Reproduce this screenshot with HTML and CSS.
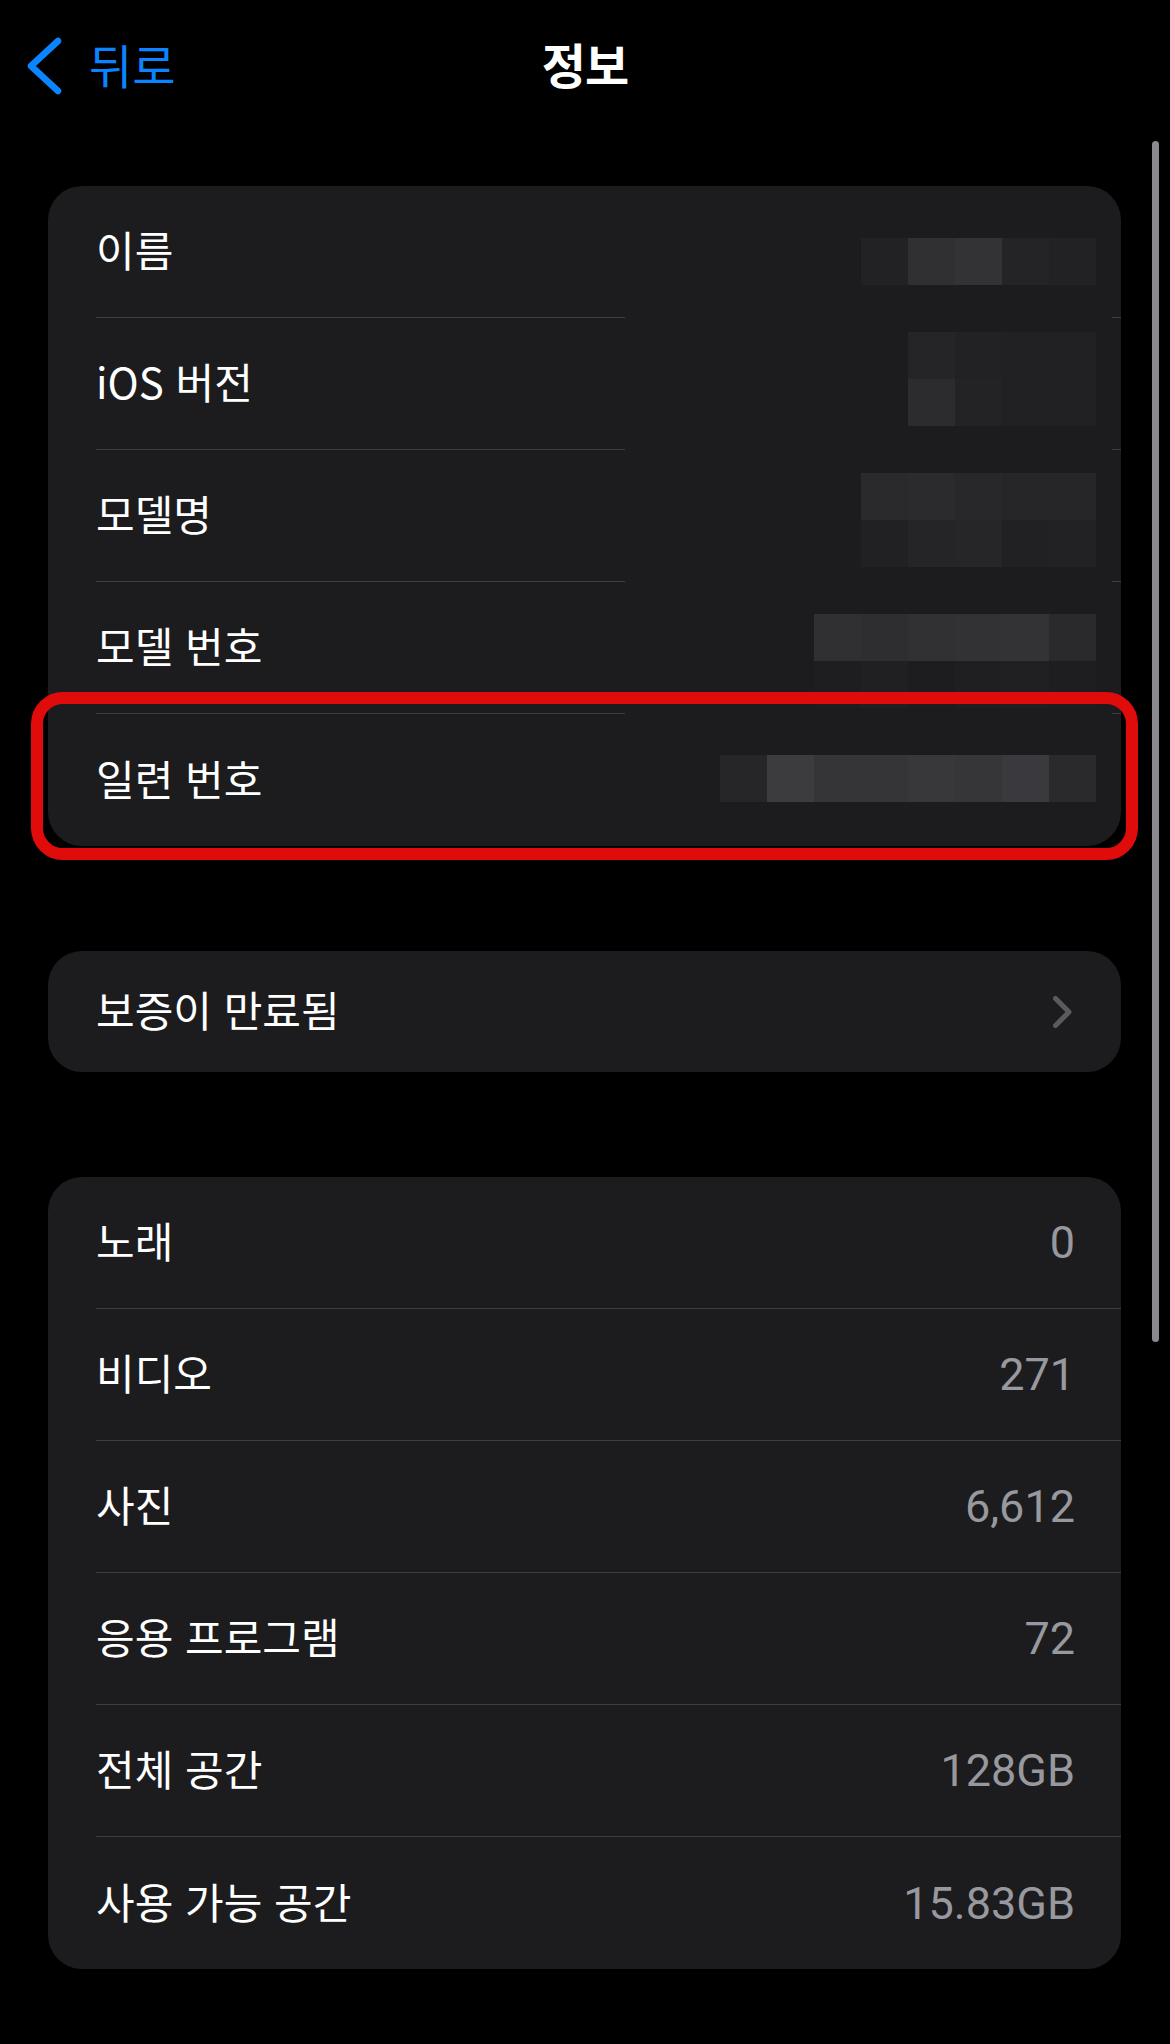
FILE: index.html
```html
<!DOCTYPE html>
<html lang="ko">
<head>
<meta charset="utf-8">
<title>정보</title>
<link rel="stylesheet" href="styles.css">
</head>
<body>
<header class="nav">
  <div class="nav-left">
    <svg class="back-icon" width="40" height="64" viewBox="0 0 40 64"><path d="M34 7 L7 32 L34 57" fill="none" stroke="#0a84ff" stroke-width="6.5" stroke-linecap="round" stroke-linejoin="round"/></svg>
    <span class="back-text">뒤로</span>
  </div>
  <h1 class="title">정보</h1>
  <div class="nav-right"></div>
</header>

<main class="content">
  <section class="card card-info">
    <div class="row">
      <span class="label">이름</span>
      <div class="mosaic mz-1">
        <i class="g22"></i><i class="g30"></i><i class="g33"></i><i class="g24"></i><i class="g22"></i>
      </div>
    </div>
    <div class="sep sep-cut"></div>
    <div class="row">
      <span class="label">iOS 버전</span>
      <div class="mosaic mz-2">
        <i class="g25"></i><i class="g22"></i><i class="g21"></i><i class="g21"></i>
        <i class="g2c"></i><i class="g23"></i><i class="g21"></i><i class="g21"></i>
      </div>
    </div>
    <div class="sep sep-cut"></div>
    <div class="row">
      <span class="label">모델명</span>
      <div class="mosaic mz-3">
        <i class="g2a"></i><i class="g2b"></i><i class="g28"></i><i class="g26"></i><i class="g26"></i>
        <i class="g21"></i><i class="g25"></i><i class="g26"></i><i class="g21"></i><i class="g22"></i>
      </div>
    </div>
    <div class="sep sep-cut"></div>
    <div class="row">
      <span class="label">모델 번호</span>
      <div class="mosaic mz-4">
        <i class="g30"></i><i class="g2e"></i><i class="g31"></i><i class="g32"></i><i class="g33"></i><i class="g2a"></i>
        <i class="g1e"></i><i class="g20"></i><i class="g1d"></i><i class="g1f"></i><i class="g20"></i><i class="g1e"></i>
      </div>
    </div>
    <div class="sep sep-cut"></div>
    <div class="row row-last">
      <span class="label">일련 번호</span>
      <div class="mosaic mz-5">
        <i class="g26"></i><i class="g3c"></i><i class="g35"></i><i class="g35"></i><i class="g38"></i><i class="g36"></i><i class="g3a"></i><i class="g2a"></i>
      </div>
    </div>
    <div class="highlight"></div>
  </section>

  <section class="card card-warranty">
    <div class="row row-link">
      <span class="label">보증이 만료됨</span>
      <svg class="chevron" width="26" height="36" viewBox="0 0 26 36"><path d="M7.5 4.5 L21 18 L7.5 31.5" fill="none" stroke="#5b5b5f" stroke-width="5" stroke-linecap="round" stroke-linejoin="round"/></svg>
    </div>
  </section>

  <section class="card card-stats">
    <div class="row row-value"><span class="label">노래</span><span class="value">0</span></div>
    <div class="sep"></div>
    <div class="row row-value"><span class="label">비디오</span><span class="value">271</span></div>
    <div class="sep"></div>
    <div class="row row-value"><span class="label">사진</span><span class="value">6,612</span></div>
    <div class="sep"></div>
    <div class="row row-value"><span class="label">응용 프로그램</span><span class="value">72</span></div>
    <div class="sep"></div>
    <div class="row row-value"><span class="label">전체 공간</span><span class="value">128GB</span></div>
    <div class="sep"></div>
    <div class="row row-value row-last"><span class="label">사용 가능 공간</span><span class="value">15.83GB</span></div>
  </section>
</main>

<div class="scrollbar"></div>
</body>
</html>
```

FILE: styles.css
```css
html, body {
  margin: 0;
  padding: 0;
  background: #000;
}

body {
  position: relative;
  width: 1170px;
  min-height: 2044px;
  overflow: hidden;
  font-family: "Noto Sans CJK KR", "Noto Sans", sans-serif;
  color: #fff;
}

/* Navigation bar */
.nav {
  display: grid;
  grid-template-columns: 1fr auto 1fr;
  align-items: center;
  height: 126px;
  padding-bottom: 8px;
}

.nav-left {
  display: flex;
  align-items: center;
  padding-left: 24px;
}

.back-icon {
  display: block;
  margin-top: 6px;
}

.back-text {
  margin-left: 25px;
  font-size: 47px;
  letter-spacing: 0;
  color: #0a84ff;
  line-height: 1;
}

.title {
  margin: 0;
  font-size: 48px;
  font-weight: 700;
  letter-spacing: -1px;
  line-height: 1;
  color: #fff;
}

/* Content */
.content {
  padding-top: 52px;
  padding-left: 48px;
  width: 1073px;
  display: flex;
  flex-direction: column;
  gap: 105px;
}

.card {
  position: relative;
  background: #1c1c1e;
  border-radius: 34px;
}

.row {
  position: relative;
  height: 131px;
  display: flex;
  align-items: center;
  justify-content: space-between;
  padding: 0 46px 0 48px;
}

.row-last {
  height: 132px;
}

.row-link {
  height: 121px;
  padding-right: 47px;
}

.label {
  font-size: 42px;
  letter-spacing: 0;
  line-height: 1;
  color: #fff;
  white-space: nowrap;
  margin-bottom: 5px;
}

.value {
  font-family: Roboto, "Liberation Sans", sans-serif;
  font-size: 45px;
  line-height: 1;
  color: #98989f;
}

.chevron {
  display: block;
}

.sep {
  height: 1px;
  margin-left: 48px;
  background: #3d3d41;
}

.sep-cut {
  background: linear-gradient(to right, #3d3d41 0, #3d3d41 529px, transparent 529px, transparent 1016px, #3d3d41 1016px);
}

/* Redaction mosaic overlay */
.mosaic {
  position: absolute;
  right: 25px;
  display: grid;
  grid-auto-rows: 47px;
}

.mosaic i {
  display: block;
}

.mz-1 { top: 52px; grid-template-columns: repeat(5, 47px); }
.mz-2 { top: 14px; grid-template-columns: repeat(4, 47px); }
.mz-3 { top: 23px; grid-template-columns: repeat(5, 47px); }
.mz-4 { top: 32px; grid-template-columns: repeat(6, 47px); }
.mz-5 { top: 41px; grid-template-columns: repeat(8, 47px); }

.g1d { background: #1d1d1f; }
.g1e { background: #1e1e20; }
.g1f { background: #1f1f21; }
.g20 { background: #202022; }
.g21 { background: #212123; }
.g22 { background: #222224; }
.g23 { background: #232325; }
.g24 { background: #242426; }
.g25 { background: #252527; }
.g26 { background: #262628; }
.g28 { background: #28282a; }
.g2a { background: #2a2a2c; }
.g2b { background: #2b2b2d; }
.g2c { background: #2c2c2e; }
.g2e { background: #2e2e30; }
.g30 { background: #303032; }
.g31 { background: #313133; }
.g32 { background: #323234; }
.g33 { background: #333335; }
.g35 { background: #353537; }
.g36 { background: #363638; }
.g38 { background: #38383a; }
.g3a { background: #3a3a3e; }
.g3c { background: #3c3c3e; }

/* Red annotation box over the serial number row */
.highlight {
  position: absolute;
  left: -17px;
  top: 506px;
  width: 1107px;
  height: 168px;
  box-sizing: border-box;
  border: 12px solid #e00b0b;
  border-radius: 32px;
  pointer-events: none;
}

/* Scroll indicator */
.scrollbar {
  position: absolute;
  left: 1152px;
  top: 141px;
  width: 7px;
  height: 1201px;
  border-radius: 4px;
  background: #8a8a8e;
}
```
